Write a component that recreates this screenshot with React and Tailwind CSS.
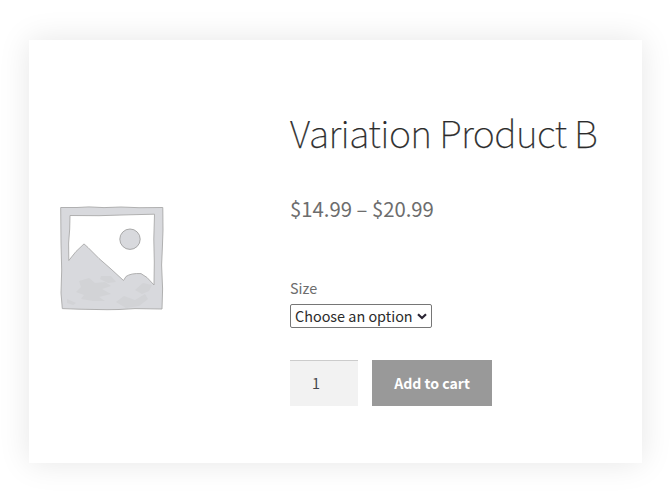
function Placeholder() {
  return (
    <svg viewBox="0 0 106 106" className="block h-[106px] w-[106px] shrink-0" aria-hidden="true">
      <path
        fillRule="evenodd"
        d="M1.7 2.5 L18 2.5 L30 1.9 L45 2.6 L62 2 L80 2.7 L103.8 2.5 L104 25 L103.4 42 L102.6 60 L103.6 84 L103 104 L76 103.6 L60 104.5 L48 104.7 L20 104.2 L3.3 103.6 L2 88 L2.7 65 L2 38 Z M11 10.5 L10.7 24 L9.6 38 L9.8 55.5 L17 46.5 L25 38.9 L29 42.5 L40 53.5 L52 64 L64.5 75.5 L67 71.5 Q72 68 82 68.6 L88 72.5 L95 80 L95.3 57 L94.8 34 L95.5 9.2 L70 9.8 L40 10.7 Z"
        fill="#d8d9dd"
        stroke="#a9a9a9"
        strokeWidth="0.9"
        strokeLinejoin="round"
      />
      <path d="M20 76 l10-3 6 5 10-1 6 4 -9 3 9 5 -12 3 6 4 -12 0 -12-2 3-4 -8-3 5-5z M42 71 l10 0 5 6 -8 1 -8-4z M57 97 l8-6 11 4 10-6 3 5 -9 7 -13 2z M76 85 l8-7 9 2 -3 6 -7 3z M8 94l9 4-3 2-6-2z" fill="#d2d3d6" />
      <circle cx="71" cy="34.2" r="10.2" fill="#d8d9dd" stroke="#a0a0a0" strokeWidth="0.9" />
    </svg>
  );
}

export default function App() {
  return (
    <div className="h-[500px] w-[670px] overflow-hidden bg-white pl-[29px] pt-10 font-['Noto_Sans_CJK_SC',sans-serif] text-[#6d6d6d]">
      <div className="flex h-[423px] w-[613px] bg-white pl-[30px] shadow-[0_0_30px_rgba(0,0,0,0.1)]">
        <div className="w-[231px] shrink-0 pt-[165px]">
          <Placeholder />
        </div>
        <div className="flex flex-col items-start pt-[66px]">
          <h1 className="h-[52px] whitespace-nowrap text-[37.6px] font-thin leading-[52px] tracking-[-0.6px] text-[#2b2b2b] [-webkit-text-stroke:0.25px_#2b2b2b]">
            Variation Product B
          </h1>
          <p className="mt-[34px] h-8 whitespace-nowrap text-[20.3px] leading-8">$14.99 – $20.99</p>
          <label className="mt-[52px] h-6 text-[14.4px] leading-6">Size</label>
          <button className="mt-[4px] flex h-6 w-[142px] items-center justify-between whitespace-nowrap rounded-[2px] border border-[#767676] bg-white pl-1 pr-1 text-[14.4px] leading-[22px] text-[#2b2b2b]">
            Choose an option
            <svg viewBox="0 0 10 7" className="h-[7px] w-2.5" fill="none" stroke="#2b2533" strokeWidth="2.2">
              <path d="M1 1.2 L5 5 L9 1.2" />
            </svg>
          </button>
          <div className="mt-8 flex h-[46px] gap-[14px]">
            <div className="w-[68px] border-t border-[#cccccc] bg-[#f2f2f2] pl-[22px] text-[14.4px] leading-[43px] text-[#43454b]">
              1
            </div>
            <button className="w-[120px] whitespace-nowrap bg-[#999999] text-[14.1px] font-bold leading-[44px] text-white">
              Add to cart
            </button>
          </div>
        </div>
      </div>
    </div>
  );
}
